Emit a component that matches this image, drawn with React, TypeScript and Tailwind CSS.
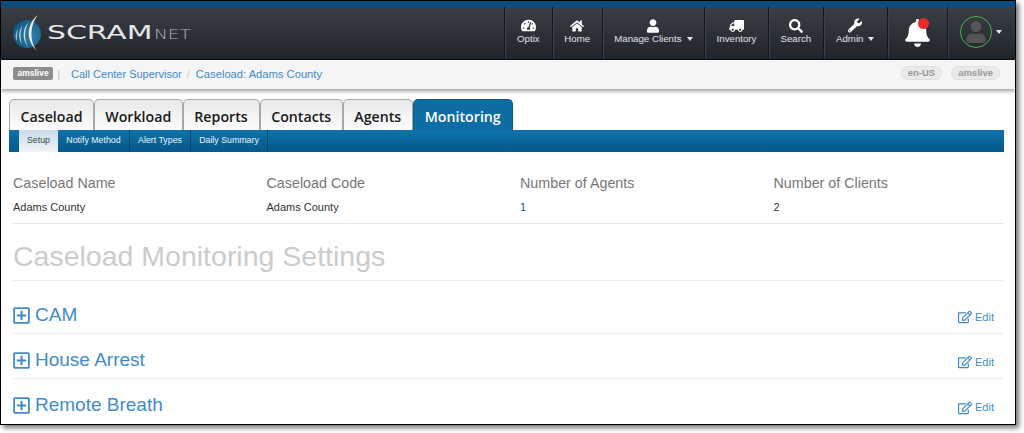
import React from "react";
import { FaHome, FaUser, FaTruck, FaSearch, FaWrench, FaBell, FaRegPlusSquare, FaRegEdit, FaTachometerAlt } from "react-icons/fa";

const sans = "font-['Liberation_Sans',Arial,sans-serif]";

function Caret({ className = "" }: { className?: string }) {
  return <span className={`inline-block w-0 h-0 border-x-[3.5px] border-x-transparent border-t-[4px] border-t-[#e5e5e5] ${className}`} />;
}

function NavItem({ icon, label, caret, w }: { icon: React.ReactNode; label: string; caret?: boolean; w: string }) {
  return (
    <div className={`${w} h-full border-l border-l-[#14171b] shadow-[inset_1px_0_0_#3c4047] flex flex-col items-center pt-[10px] text-[#e2e4e6]`}>
      <div className="h-[17px] flex items-center justify-center text-white">{icon}</div>
      <div className="text-[9.7px] leading-[12px] -mt-[1px] whitespace-nowrap flex items-center gap-[5px]">
        {label}
        {caret && <Caret />}
      </div>
    </div>
  );
}

function Logo() {
  return (
    <div className="flex items-center ml-[12px] mt-[-1px]">
      <svg width="32" height="38" viewBox="0 0 32 38" className="shrink-0">
        <defs>
          <radialGradient id="g" cx="0.65" cy="0.55" r="0.7">
            <stop offset="0" stopColor="#2f7fa8" />
            <stop offset="1" stopColor="#11567f" />
          </radialGradient>
        </defs>
        <circle cx="14" cy="20" r="14" fill="url(#g)" />
        <path d="M25 1 C14 9 12 26 24 37 C17 28 16 12 25 1Z" fill="#e8eef2" />
        <path d="M16 8 C9 15 9 25 15 33 C11 25 11 16 16 8Z" fill="#cfe0ea" />
        <path d="M10 11 C5 17 5 25 9 30 C7 24 7 17 10 11Z" fill="#b5d0de" />
        <path d="M5 15 C2 19 2 24 4 27 C4 23 4 19 5 15Z" fill="#9dc0d2" />
      </svg>
      <div className="ml-[2px] flex items-baseline font-['DejaVu_Sans',sans-serif] text-[#e4e6e8]">
        <span className="w-[107px] inline-block origin-left scale-x-[1.57] text-[19px] leading-none">SCRAM</span>
        <span className="inline-block origin-left scale-x-[1.27] text-[14.5px] leading-none text-[#aeb2b6] font-extralight">NET</span>
      </div>
    </div>
  );
}

function Tab({ label, active, w }: { label: string; active?: boolean; w: string }) {
  return (
    <div className={`${w} h-[31px] pt-[3px] rounded-t-[5px] border border-b-0 flex items-center justify-center font-['Open_Sans',sans-serif] font-semibold text-[14.2px] ${active ? "bg-gradient-to-b from-[#0f6c9f] to-[#0b6ea6] border-[#0a5b88] text-white" : "bg-gradient-to-b from-[#e9e9e9] to-[#fdfdfd] border-[#a9a9a9] text-[#1a1a1a]"}`}>
      {label}
    </div>
  );
}

function Stat({ title, value, blue }: { title: string; value: string; blue?: boolean }) {
  return (
    <div className="w-[253.5px] shrink-0">
      <div className="text-[14.3px] leading-[20px] text-[#777]">{title}</div>
      <div className={`text-[11px] leading-[16px] mt-[6px] ${blue ? "text-[#23527c]" : "text-[#333]"}`}>{value}</div>
    </div>
  );
}

function Section({ label, last }: { label: string; last?: boolean }) {
  return (
    <div className={`h-[45px] pt-[8px] flex items-center justify-between ${last ? "" : "border-b border-b-[#eeeeee]"}`}>
      <div className="flex items-center text-[#428bca] text-[19px]">
        <FaRegPlusSquare className="text-[#428bca] w-[17px] h-[19px] mr-[5px]" />
        {label}
      </div>
      <div className="flex items-center text-[#428bca] text-[11px] mr-[10px] mt-[4px]">
        <FaRegEdit className="w-[14px] h-[14px] mr-[3px]" />
        Edit
      </div>
    </div>
  );
}

export default function App() {
  return (
    <div className={`w-[1024px] h-[433px] bg-white overflow-hidden ${sans}`}>
      <div className="w-[1016px] h-[425px] border border-black bg-white shadow-[3px_3px_5px_rgba(0,0,0,0.55)] flex flex-col overflow-hidden">
        <div className="h-[6px] shrink-0 bg-[#0a4c7c]" />
        <div className="h-[53px] shrink-0 bg-gradient-to-b from-[#3a3e45] to-[#20252b] flex items-stretch justify-between border-b border-b-[#0d0d0d]">
          <Logo />
          <div className="flex items-stretch">
            <NavItem w="w-[47.7px]" label="Optix" icon={<FaTachometerAlt className="w-[15px] h-[15px]" />} />
            <NavItem w="w-[50px]" label="Home" icon={<FaHome className="w-[14px] h-[14px]" />} />
            <NavItem w="w-[102.3px]" label="Manage Clients" caret icon={<FaUser className="w-[12px] h-[14px]" />} />
            <NavItem w="w-[64px]" label="Inventory" icon={<FaTruck className="w-[15px] h-[14px] -scale-x-100" />} />
            <NavItem w="w-[54.7px]" label="Search" icon={<FaSearch className="w-[14px] h-[14px]" />} />
            <NavItem w="w-[64px]" label="Admin" caret icon={<FaWrench className="w-[14px] h-[15px]" />} />
            <div className="w-[60.3px] h-full border-l border-l-[#14171b] shadow-[inset_1px_0_0_#3c4047] flex items-center justify-center pb-[1px]">
              <div className="relative">
                <FaBell className="w-[25px] h-[28px] text-white" />
                <div className="absolute top-[-1px] right-[1px] w-[11px] h-[11px] rounded-full bg-[#ee2b2b]" />
              </div>
            </div>
            <div className="w-[68px] h-full border-l border-l-[#14171b] shadow-[inset_1px_0_0_#3c4047] flex items-center pl-[12px] pb-[2px]">
              <div className="w-[32px] h-[32px] shrink-0 rounded-full border-[1.5px] border-[#4caf50] flex items-center justify-center overflow-hidden">
                <FaUser className="w-[20px] h-[22px] text-[#555]" />
              </div>
              <Caret className="ml-[4px]" />
            </div>
          </div>
        </div>
        <div className="h-[29px] shrink-0 bg-[#f5f5f5] shadow-[0_2px_4px_rgba(0,0,0,0.4)] flex items-center justify-between pl-[12px] pr-[15px] relative">
          <div className="flex items-center text-[11px] -mt-[1px]">
            <span className="h-[13px] px-[4.5px] bg-[#8c8c8c] rounded-[2px] text-white text-[8.5px] font-bold leading-[13px]">amslive</span>
            <span className="text-[#bbb] ml-[4px] mr-[11px]">|</span>
            <span className="text-[#428bca]">Call Center Supervisor</span>
            <span className="text-[#ccc] ml-[5px] mr-[6px]">/</span>
            <span className="text-[#428bca] text-[11.2px]">Caseload: Adams County</span>
          </div>
          <div className="flex items-center gap-[9px] -mt-[4px]">
            <span className="h-[14px] px-[6px] rounded-full bg-[#eaeaea] border border-[#e0e0e0] text-[#999] text-[9.5px] font-bold leading-[12px]">en-US</span>
            <span className="h-[14px] px-[6px] rounded-full bg-[#eaeaea] border border-[#e0e0e0] text-[#999] text-[9.5px] font-bold leading-[12px]">amslive</span>
          </div>
        </div>
        <div className="mt-[10px] pl-[8px] pr-[11px] flex items-end shrink-0">
          <Tab w="w-[85px]" label="Caseload" />
          <Tab w="w-[88.5px]" label="Workload" />
          <Tab w="w-[77px]" label="Reports" />
          <Tab w="w-[83.5px]" label="Contacts" />
          <Tab w="w-[69.5px]" label="Agents" />
          <Tab w="w-[100.5px]" label="Monitoring" active />
        </div>
        <div className="ml-[8px] mr-[11px] h-[22px] shrink-0 bg-gradient-to-b from-[#0e74ab] to-[#07578a] flex items-stretch text-[8.8px] text-[#eef4f8]">
          <div className="ml-[10px] w-[39px] bg-gradient-to-b from-[#c9dcea] to-[#eef3f7] text-[#444] flex items-center justify-center">Setup</div>
          <div className="w-[72px] flex items-center justify-center border-r border-r-[#05466f]">Notify Method</div>
          <div className="w-[61px] flex items-center justify-center border-r border-r-[#05466f]">Alert Types</div>
          <div className="w-[77px] flex items-center justify-center border-r border-r-[#05466f]">Daily Summary</div>
        </div>
        <div className="pl-[12px] pr-[11px] pt-[21px] flex-1 min-h-0">
          <div className="flex h-[51px] border-b border-b-[#e5e5e5]">
            <Stat title="Caseload Name" value="Adams County" />
            <Stat title="Caseload Code" value="Adams County" />
            <Stat title="Number of Agents" value="1" blue />
            <Stat title="Number of Clients" value="2" />
          </div>
          <div className="h-[57px] pt-[8px] flex items-center border-b border-b-[#eeeeee] text-[#cccccc] text-[28.5px]">Caseload Monitoring Settings</div>
          <div className="mt-[8px]">
            <Section label="CAM" />
            <Section label="House Arrest" />
            <Section label="Remote Breath" last />
          </div>
        </div>
      </div>
    </div>
  );
}
